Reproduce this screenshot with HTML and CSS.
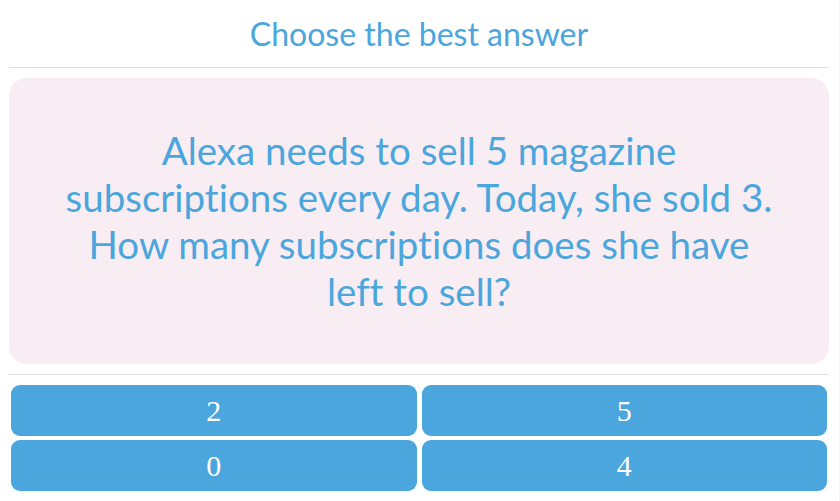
FILE: index.html
```html
<!DOCTYPE html>
<html lang="en">
<head>
    <meta charset="UTF-8">
    <meta name="viewport" content="width=device-width, initial-scale=1.0">
    <title>Choose the best answer</title>
    <link rel="stylesheet" href="styles.css">
</head>
<body>

<div class="quiz">
    <!-- Header -->
    <div class="quiz-header">
        <h2 class="quiz-title">Choose the best answer</h2>
    </div>

    <!-- Question -->
    <div class="question">
        <p class="question-text">Alexa needs to sell 5 magazine subscriptions every day. Today, she sold 3. How many subscriptions does she have left to sell?</p>
    </div>

    <!-- Answers -->
    <div class="answers">
        <button class="answer">2</button>
        <button class="answer">5</button>
        <button class="answer">0</button>
        <button class="answer">4</button>
    </div>
</div>

</body>
</html>
```

FILE: styles.css
```css
body {
    margin: 0;
    background-color: #fff;
    font-family: Lato, "Open Sans", sans-serif;
    font-variant-ligatures: none;
}
.quiz {
    padding: 0 10px 0 9px;
    border-right: 1px dotted #eeeeee;
    min-height: 501px;
    box-sizing: border-box;
}
.quiz-header {
    height: 67px;
    display: flex;
    align-items: center;
    justify-content: center;
    border-bottom: 1px solid #e0dee9;
}
.quiz-title {
    margin: 0;
    font-weight: normal;
    font-size: 32px;
    color: #4aa6dc;
}
.question {
    margin-top: 10px;
    height: 286px;
    background-color: #f9edf4;
    border-radius: 18px;
    display: flex;
    align-items: center;
    justify-content: center;
    padding: 0 40px;
    box-sizing: border-box;
}
.question-text {
    margin: 0;
    max-width: 712px;
    font-size: 38.5px;
    line-height: 47px;
    text-align: center;
    color: #4aa6dc;
}
.answers {
    margin-top: 10px;
    border-top: 1px solid #e0dee9;
    padding: 10px 2px 0 2px;
    display: grid;
    grid-template-columns: 1fr 1fr;
    column-gap: 5px;
    row-gap: 4px;
}
.answer {
    height: 51px;
    border: none;
    border-radius: 9px;
    background-color: #4aa6dc;
    color: #fff;
    font-family: "Liberation Serif", serif;
    font-size: 30px;
    cursor: pointer;
}
```
